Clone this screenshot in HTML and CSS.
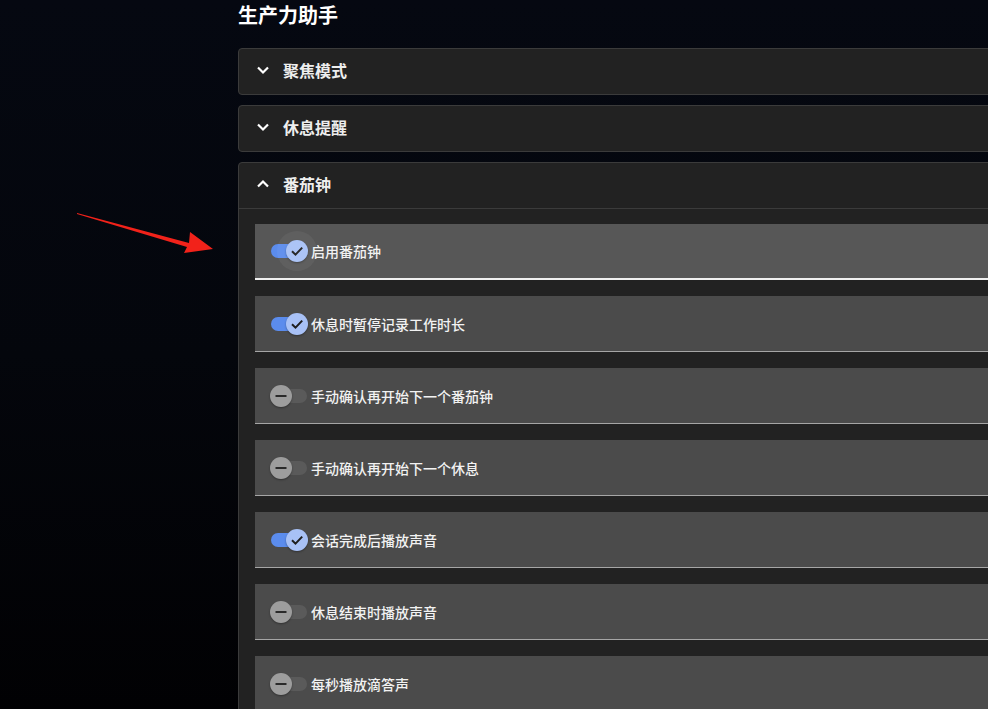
FILE: index.html
```html
<!DOCTYPE html>
<html lang="zh-CN">

<head>
  <meta charset="UTF-8">
  <meta name="viewport" content="width=device-width, initial-scale=1.0">
  <title>生产力助手</title>
  <link rel="stylesheet" href="styles.css">
</head>

<body>
  <!-- flecha roja de anotación -->
  <svg class="flecha" width="240" height="709" viewBox="0 0 240 709">
    <polygon points="77,213 189,243 190,232 213,249 184,253 187,247 77,214" fill="#f2221a" />
  </svg>

  <main class="ajustes">
    <h2 class="titulo">生产力助手</h2>

    <section class="panel">
      <div class="panel-cabecera">
        <svg class="chevron" width="12" height="12" viewBox="0 0 12 12"><path d="M1 3.5 L6 8.5 L11 3.5" /></svg>
        <span>聚焦模式</span>
      </div>
    </section>

    <section class="panel">
      <div class="panel-cabecera">
        <svg class="chevron" width="12" height="12" viewBox="0 0 12 12"><path d="M1 3.5 L6 8.5 L11 3.5" /></svg>
        <span>休息提醒</span>
      </div>
    </section>

    <section class="panel abierto">
      <div class="panel-cabecera">
        <svg class="chevron" width="12" height="12" viewBox="0 0 12 12"><path d="M1 8.5 L6 3.5 L11 8.5" /></svg>
        <span>番茄钟</span>
      </div>
      <div class="panel-cuerpo" id="opciones"></div>
    </section>
  </main>

  <script>
    const opciones = [
      { texto: '启用番茄钟', activo: true, hover: true },
      { texto: '休息时暂停记录工作时长', activo: true },
      { texto: '手动确认再开始下一个番茄钟', activo: false },
      { texto: '手动确认再开始下一个休息', activo: false },
      { texto: '会话完成后播放声音', activo: true },
      { texto: '休息结束时播放声音', activo: false },
      { texto: '每秒播放滴答声', activo: false }
    ];

    const check = '<svg width="16" height="16" viewBox="0 0 16 16"><path d="M3 8.2 L6.5 11.6 L13.2 4.6" fill="none" stroke="#1e1e1e" stroke-width="2"/></svg>';
    const menos = '<svg width="16" height="16" viewBox="0 0 16 16"><path d="M2.5 8 H13.5" stroke="#2a2a2a" stroke-width="2"/></svg>';

    const cuerpo = document.getElementById('opciones');
    opciones.forEach(op => {
      const fila = document.createElement('label');
      fila.className = 'fila' + (op.hover ? ' hover' : '');
      fila.innerHTML = `
        <span class="switch ${op.activo ? 'on' : 'off'}">
          <span class="pista"></span>
          <span class="bola">${op.activo ? check : menos}</span>
        </span>
        <span class="fila-texto">${op.texto}</span>
      `;
      cuerpo.appendChild(fila);
    });
  </script>
</body>

</html>
```

FILE: styles.css
```css
body {
  margin: 0;
  height: 709px;
  overflow: hidden;
  background: linear-gradient(180deg, #050811 0%, #04060c 50%, #010103 100%);
  font-family: "Noto Sans CJK SC", "Noto Sans", sans-serif;
  color: #f2f2f2;
  position: relative;
}

.flecha {
  position: absolute;
  left: 0;
  top: 0;
  z-index: 5;
}

.ajustes {
  margin-left: 238px;
  width: 820px;
}

.titulo {
  margin: 0;
  height: 48px;
  padding-top: 1px;
  box-sizing: border-box;
  font-size: 20px;
  font-weight: 700;
  line-height: 28px;
  color: #ffffff;
}

.panel {
  background: #222222;
  border: 1px solid #3b3b3b;
  border-radius: 4px;
  margin-bottom: 10px;
}

.panel-cabecera {
  display: flex;
  align-items: center;
  height: 45px;
  box-sizing: border-box;
  padding: 0 0 3px 18px;
  gap: 14px;
  font-size: 16px;
  font-weight: 700;
  color: #eeeeee;
}

.chevron path {
  fill: none;
  stroke: #ffffff;
  stroke-width: 2.2;
}

.abierto .panel-cabecera {
  height: 46px;
  border-bottom: 1px solid #3b3b3b;
}

.panel-cuerpo {
  padding: 15px 0 0 16px;
  display: flex;
  flex-direction: column;
  gap: 16px;
}

.fila {
  display: flex;
  align-items: center;
  height: 55px;
  padding-left: 16px;
  background: #4b4b4b;
  border-bottom: 1px solid #a6a6a6;
  font-size: 14px;
  font-weight: 500;
}

.fila.hover {
  background: #575757;
  border-bottom: 2px solid #f0f0f0;
  height: 54px;
}

.switch {
  position: relative;
  width: 36px;
  height: 20px;
  margin-right: 4px;
  flex-shrink: 0;
}

.pista {
  position: absolute;
  left: 0;
  top: 3px;
  width: 36px;
  height: 14px;
  border-radius: 7px;
  background: #5a5a5a;
}

.on .pista {
  background: #5b8ced;
}

.bola {
  position: absolute;
  top: -1px;
  left: -1px;
  width: 22px;
  height: 22px;
  border-radius: 50%;
  background: #9d9d9d;
  display: flex;
  align-items: center;
  justify-content: center;
  box-shadow: 0 1px 2px rgba(0, 0, 0, 0.35);
}

.on .bola {
  left: 15px;
  background: #a8c1f6;
}

.hover .bola::before {
  content: "";
  position: absolute;
  left: -9px;
  top: -9px;
  width: 40px;
  height: 40px;
  border-radius: 50%;
  background: rgba(255, 255, 255, 0.05);
}
```
